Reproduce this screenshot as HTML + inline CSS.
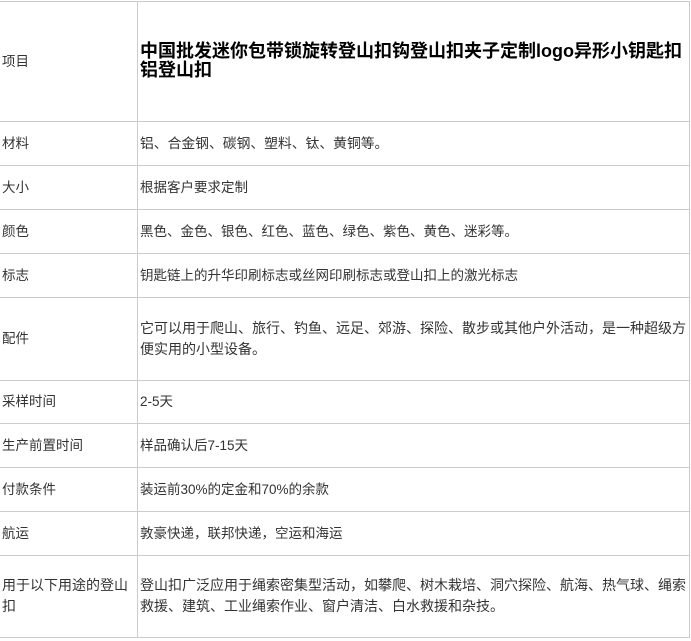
<!DOCTYPE html>
<html><head><meta charset="utf-8"><style>
body{margin:0;width:691px;height:641px;background:#fff;position:relative;overflow:hidden;font-family:"Liberation Sans","Noto Sans CJK SC",sans-serif;font-size:13.5px;color:#333}
.h{position:absolute;left:0;width:690px;height:1px;background:#ccc}
.v{position:absolute;top:1px;height:636px;width:1px;background:#ccc}
.c{position:absolute;display:flex;align-items:center;line-height:21px}
.l{left:2px;width:132px}
.r{left:140px;width:548px}
.w{font-size:14px}
</style></head><body>
<div class="h" style="top:1px"></div>
<div class="h" style="top:121px"></div>
<div class="h" style="top:165px"></div>
<div class="h" style="top:209px"></div>
<div class="h" style="top:253px"></div>
<div class="h" style="top:297px"></div>
<div class="h" style="top:380px"></div>
<div class="h" style="top:423px"></div>
<div class="h" style="top:467px"></div>
<div class="h" style="top:511px"></div>
<div class="h" style="top:555px"></div>
<div class="h" style="top:637px"></div>
<div class="v" style="left:137px"></div>
<div class="v" style="left:689px"></div>

<div class="c l" style="top:1px;height:120px">项目</div>
<div class="c r" style="top:1px;height:120px;font-weight:bold;font-size:18px;line-height:19px;color:#000">中国批发迷你包带锁旋转登山扣钩登山扣夹子定制logo异形小钥匙扣铝登山扣</div>
<div class="c l" style="top:121px;height:44px">材料</div>
<div class="c r" style="top:121px;height:44px;font-size:13.8px">铝、合金钢、碳钢、塑料、钛、黄铜等。</div>
<div class="c l" style="top:165px;height:44px">大小</div>
<div class="c r" style="top:165px;height:44px">根据客户要求定制</div>
<div class="c l" style="top:209px;height:44px">颜色</div>
<div class="c r" style="top:209px;height:44px">黑色、金色、银色、红色、蓝色、绿色、紫色、黄色、迷彩等。</div>
<div class="c l" style="top:253px;height:44px">标志</div>
<div class="c r" style="top:253px;height:44px">钥匙链上的升华印刷标志或丝网印刷标志或登山扣上的激光标志</div>
<div class="c l" style="top:297px;height:83px">配件</div>
<div class="c r w" style="top:297px;height:83px">它可以用于爬山、旅行、钓鱼、远足、郊游、探险、散步或其他户外活动，是一种超级方便实用的小型设备。</div>
<div class="c l" style="top:380px;height:43px">采样时间</div>
<div class="c r" style="top:380px;height:43px">2-5天</div>
<div class="c l" style="top:423px;height:44px">生产前置时间</div>
<div class="c r" style="top:423px;height:44px">样品确认后7-15天</div>
<div class="c l" style="top:467px;height:44px">付款条件</div>
<div class="c r" style="top:467px;height:44px">装运前30%的定金和70%的余款</div>
<div class="c l" style="top:511px;height:44px">航运</div>
<div class="c r" style="top:511px;height:44px">敦豪快递，联邦快递，空运和海运</div>
<div class="c l w" style="top:555px;height:82px">用于以下用途的登山扣</div>
<div class="c r w" style="top:555px;height:82px">登山扣广泛应用于绳索密集型活动，如攀爬、树木栽培、洞穴探险、航海、热气球、绳索救援、建筑、工业绳索作业、窗户清洁、白水救援和杂技。</div>
</body></html>
